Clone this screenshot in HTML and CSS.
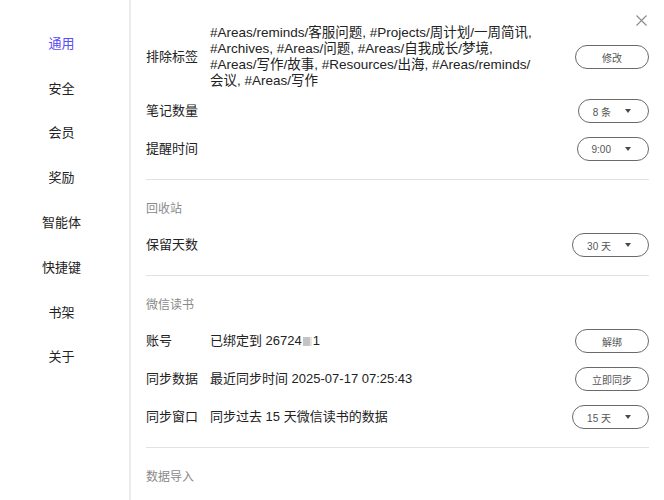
FILE: index.html
```html
<!DOCTYPE html>
<html lang="zh-CN">
<head>
<meta charset="utf-8">
<title>设置</title>
<link rel="stylesheet" href="styles.css">
</head>
<body>
<div class="app">
  <nav class="sidebar">
    <a class="nav-item active">通用</a>
    <a class="nav-item">安全</a>
    <a class="nav-item">会员</a>
    <a class="nav-item">奖励</a>
    <a class="nav-item">智能体</a>
    <a class="nav-item">快捷键</a>
    <a class="nav-item">书架</a>
    <a class="nav-item">关于</a>
  </nav>
  <main class="content">
    <button class="close" aria-label="关闭">
      <svg width="11" height="11" viewBox="0 0 11 11"><path d="M0.5 0.5 L10.5 10.5 M10.5 0.5 L0.5 10.5" stroke="#8a8a8a" stroke-width="1.1" fill="none"/></svg>
    </button>

    <section class="group group-first">
      <div class="row row-tags">
        <span class="label">排除标签</span>
        <div class="value tags">#Areas/reminds/客服问题, #Projects/周计划/一周简讯,<br>#Archives, #Areas/问题, #Areas/自我成长/梦境,<br>#Areas/写作/故事, #Resources/出海, #Areas/reminds/<br>会议, #Areas/写作</div>
        <button class="pill">修改</button>
      </div>
      <div class="row row-after-tags">
        <span class="label">笔记数量</span>
        <div class="value"></div>
        <button class="select">8 条<i class="caret"></i></button>
      </div>
      <div class="row">
        <span class="label">提醒时间</span>
        <div class="value"></div>
        <button class="select">9:00<i class="caret"></i></button>
      </div>
    </section>

    <hr class="divider">

    <section class="group">
      <h3 class="group-title">回收站</h3>
      <div class="row">
        <span class="label">保留天数</span>
        <div class="value"></div>
        <button class="select">30 天<i class="caret"></i></button>
      </div>
    </section>

    <hr class="divider">

    <section class="group">
      <h3 class="group-title">微信读书</h3>
      <div class="row">
        <span class="label">账号</span>
        <div class="value">已绑定到 26724<span class="masked"></span>1</div>
        <button class="pill">解绑</button>
      </div>
      <div class="row">
        <span class="label">同步数据</span>
        <div class="value">最近同步时间 2025-07-17 07:25:43</div>
        <button class="pill">立即同步</button>
      </div>
      <div class="row">
        <span class="label">同步窗口</span>
        <div class="value">同步过去 15 天微信读书的数据</div>
        <button class="select">15 天<i class="caret"></i></button>
      </div>
    </section>

    <hr class="divider">

    <section class="group">
      <h3 class="group-title">数据导入</h3>
    </section>
  </main>
</div>
</body>
</html>
```

FILE: styles.css
```css
* { box-sizing: border-box; }

html, body {
  margin: 0;
  padding: 0;
  background: #ffffff;
}

body {
  width: 664px;
  height: 500px;
  overflow: hidden;
  font-family: "Liberation Sans", "Noto Sans CJK SC", sans-serif;
  color: #222222;
}

.app {
  display: flex;
  height: 500px;
}

.sidebar {
  width: 131px;
  flex: none;
  padding: 20px 6px 0 0;
  border-right: 2px solid #ebebeb;
  display: flex;
  flex-direction: column;
}

.nav-item {
  display: flex;
  align-items: center;
  justify-content: center;
  height: 44.8px;
  font-size: 13px;
  color: #222222;
  text-decoration: none;
}

.nav-item.active {
  color: #5a4cf6;
}

.content {
  position: relative;
  flex: 1;
  padding: 25px 15px 0 15px;
}

.close {
  position: absolute;
  top: 15px;
  right: 17px;
  width: 11px;
  height: 11px;
  padding: 0;
  border: 0;
  background: none;
  display: block;
}
.close svg { display: block; }

.group {
  display: flex;
  flex-direction: column;
  gap: 14px;
  padding: 22px 0 18px;
}

.group-first {
  padding-top: 0;
}

.group-title {
  margin: 0 0 3px;
  font-size: 12px;
  line-height: 14px;
  font-weight: normal;
  color: #8a8a8a;
}

.row {
  display: flex;
  align-items: center;
  gap: 12px;
  min-height: 24px;
  font-size: 13px;
  line-height: 18px;
}

.row-after-tags {
  margin-top: -4px;
}

.label {
  width: 52px;
  flex: none;
  white-space: nowrap;
  color: #222222;
}

.value {
  flex: 1;
  color: #222222;
  white-space: nowrap;
}

.tags {
  white-space: normal;
  font-size: 13.5px;
  line-height: 16px;
}

.masked {
  display: inline-block;
  width: 9px;
  height: 9px;
  margin: 0 1px 0 1px;
  background: linear-gradient(90deg, #c4c4c4 0 7px, #e6e6e6 7px);
  vertical-align: -1px;
}

.pill,
.select {
  flex: none;
  height: 24px;
  border: 1px solid #6a6a6a;
  border-radius: 12px;
  background: #ffffff;
  font-family: "Liberation Sans", "Noto Sans CJK SC", sans-serif;
  font-size: 10px;
  color: #555555;
  padding: 0;
}

.pill {
  width: 74px;
  text-align: center;
}

.select {
  display: inline-flex;
  align-items: center;
  gap: 14px;
  padding: 0 17px 0 14px;
}

.caret {
  display: inline-block;
  width: 0;
  height: 0;
  border-left: 3.5px solid transparent;
  border-right: 3.5px solid transparent;
  border-top: 4px solid #4a4a4a;
}

.divider {
  margin: 0;
  border: 0;
  border-top: 1px solid #e2e2e2;
}
```
